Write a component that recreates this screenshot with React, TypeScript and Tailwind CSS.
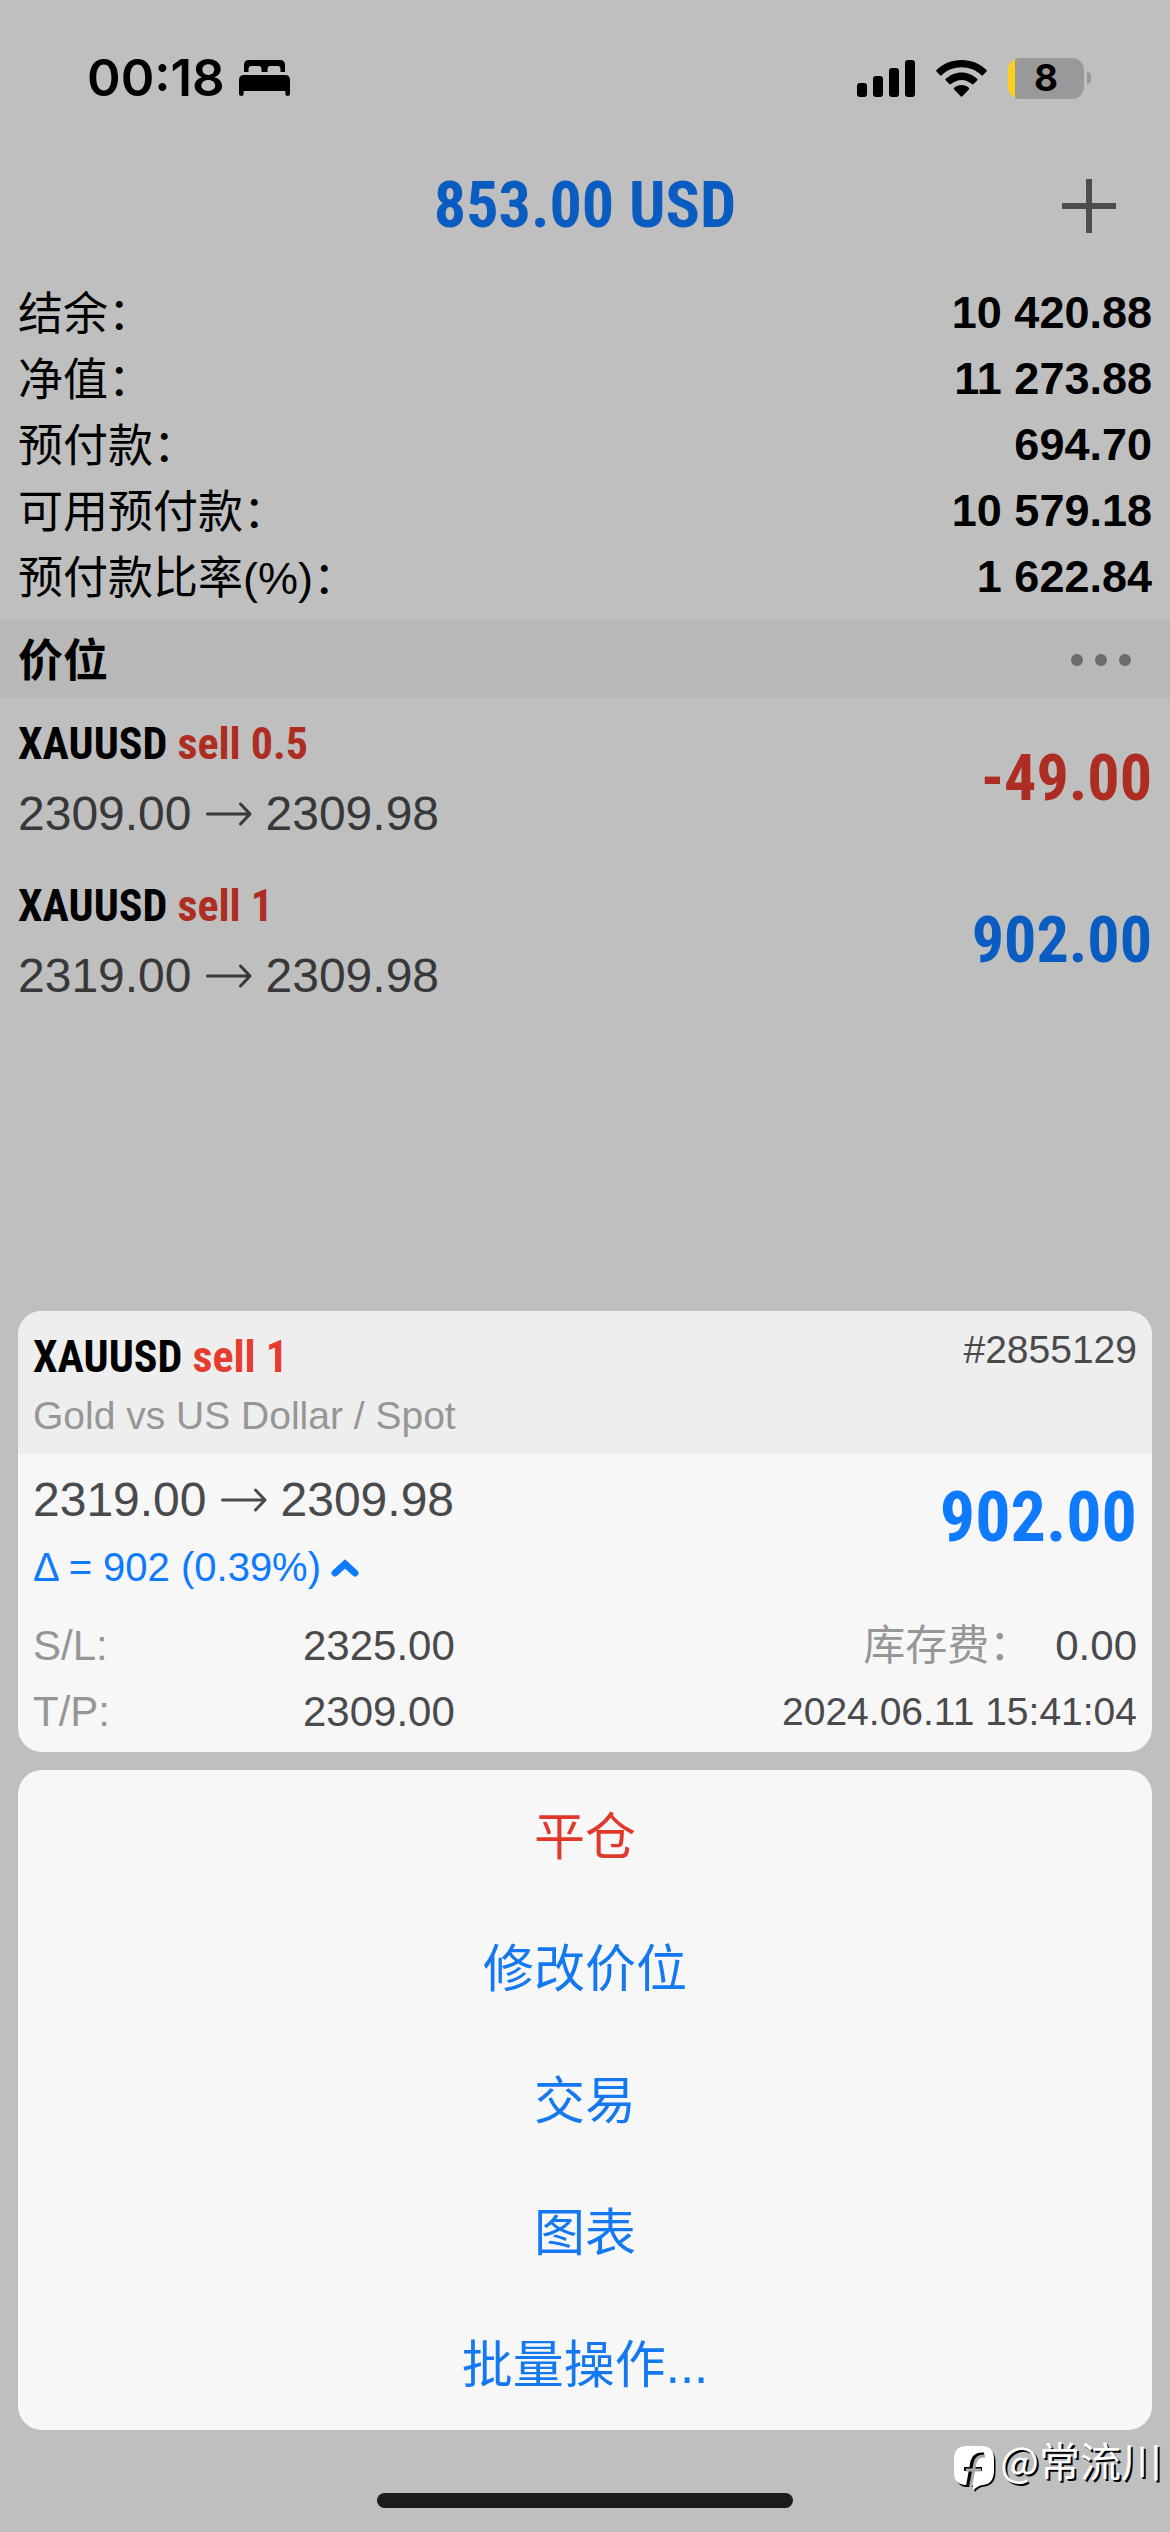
import React from "react";
import clsx from "clsx";

interface Position {
  symbol: string;
  side: string;
  open: string;
  current: string;
  profit: string;
}

interface Action {
  label: string;
  danger?: boolean;
}

const SUMMARY = [
  { label: "结余：", value: "10 420.88" },
  { label: "净值：", value: "11 273.88" },
  { label: "预付款：", value: "694.70" },
  { label: "可用预付款：", value: "10 579.18" },
  { label: "预付款比率(%)：", value: "1 622.84" },
];

const POSITIONS: Position[] = [
  { symbol: "XAUUSD", side: "sell 0.5", open: "2309.00", current: "2309.98", profit: "-49.00" },
  { symbol: "XAUUSD", side: "sell 1", open: "2319.00", current: "2309.98", profit: "902.00" },
];

const ACTIONS: Action[] = [
  { label: "平仓", danger: true },
  { label: "修改价位" },
  { label: "交易" },
  { label: "图表" },
  { label: "批量操作..." },
];

const BedIcon = () => (
  <svg width="51" height="36" viewBox="0 0 51 36" aria-hidden="true">
    <path d="M5 12V5q0-5 5-5h31q5 0 5 5v7h-4.500V9q0-3-3-3h-7q-3 0-3 3v3h-6V9q0-3-3-3h-7q-3 0-3 3v3z" />
    <path d="M0 20q0-5 5-5h41q5 0 5 5v14q0 2-2.300 2t-2.300-2v-3H4.600v3q0 2-2.300 2T0 34z" />
  </svg>
);

const SignalIcon = () => (
  <svg width="58" height="37" viewBox="0 0 58 37" aria-hidden="true">
    <rect x="0" y="23" width="10" height="14" rx="3" />
    <rect x="16" y="16" width="10" height="21" rx="3" />
    <rect x="32" y="8" width="10" height="29" rx="3" />
    <rect x="48" y="0" width="10" height="37" rx="3" />
  </svg>
);

const WifiIcon = () => (
  <svg width="51" height="37" viewBox="0 0 51 37" aria-hidden="true">
    <path d="M25.500 0C35 0 44 3.600 50.500 10q.8.8 0 1.600l-3.600 3.600q-.8.8-1.600 0C40 10 33 7.300 25.500 7.300S11 10 5.700 15.200q-.8.8-1.600 0L.5 11.600q-.8-.8 0-1.600C7 3.600 16 0 25.500 0z" />
    <path d="M25.500 12.500c6 0 11.500 2.300 15.700 6.300q.8.800 0 1.600l-3.700 3.700q-.8.800-1.600 0c-2.800-2.600-6.500-4.200-10.400-4.200s-7.600 1.600-10.400 4.200q-.8.800-1.600 0l-3.700-3.700q-.8-.8 0-1.600c4.200-4 9.700-6.300 15.700-6.300z" />
    <path d="M25.500 25c2.800 0 5.300 1 7.300 2.800q.8.800 0 1.600l-6.400 6.900q-.9.900-1.800 0l-6.400-6.900q-.8-.8 0-1.600c2-1.800 4.500-2.800 7.300-2.800z" />
  </svg>
);

const Battery = () => (
  <div className="flex items-center gap-[3px]">
    <div className="flex h-[41px] w-[76px] items-center justify-center rounded-xl bg-linear-to-r from-[#fccf1c] from-[7px] to-[#999999] to-[7px]">
      <span className="text-[37px] font-bold">8</span>
    </div>
    <div className="h-3 w-1 rounded-r-full bg-[#999999]" />
  </div>
);

const ArrowIcon = () => (
  <svg
    width="46"
    height="24"
    viewBox="0 0 46 24"
    fill="none"
    stroke="currentColor"
    strokeWidth="3"
    strokeLinecap="round"
    strokeLinejoin="round"
    aria-hidden="true"
  >
    <path d="M1.500 12H44M34.500 2l9.500 10-9.500 10" />
  </svg>
);

const WatermarkLogo = () => (
  <svg width="42" height="46" viewBox="0 0 42 46" aria-hidden="true">
    <path
      d="M14 2h14q13 0 13.500 13v11q0 13-11 14.500-6 .5-9.500 5.500l-2-5h-6Q2 41 2 27V15Q2 2 14 2z"
      fill="#000"
    />
    <path
      d="M13 0h14q13 0 13 13v11q0 14-11 15-6 .5-9.500 5.500L18.500 39H13Q0 39 0 26V13Q0 0 13 0z"
      fill="#fff"
    />
    <path d="M30 8.500q-9.500-1-11.500 7L14 40M10 23h18" fill="none" stroke="#000" strokeWidth="4" />
    <path d="M31 10q-8.500-.5-10 7l-4.500 24M12 24h15" fill="none" stroke="#a8a8a8" strokeWidth="3" />
  </svg>
);

const PositionName = ({ symbol, side, sideColor }: { symbol: string; side: string; sideColor: string }) => (
  <p className="font-['Roboto_Condensed','Roboto',sans-serif] text-[44px] font-bold">
    {symbol} <span className={sideColor}>{side}</span>
  </p>
);

const PriceMove = ({ open, current }: { open: string; current: string }) => (
  <p className="flex items-center gap-[14px] text-[48px]">
    {open}
    <ArrowIcon />
    {current}
  </p>
);

const StatusBar = () => (
  <div className="flex h-[156px] items-center justify-between pr-[79px] pl-[87px] font-['Inter',sans-serif]">
    <div className="flex items-center gap-[14px]">
      <span className="text-[51px] font-semibold">00:18</span>
      <BedIcon />
    </div>
    <div className="flex items-center gap-[21px]">
      <SignalIcon />
      <WifiIcon />
      <Battery />
    </div>
  </div>
);

const PositionCard = () => (
  <section className="overflow-hidden rounded-3xl bg-[#f7f7f7] text-[#4a4a4c]">
    <div className="flex h-[143px] items-start justify-between bg-[#eeeeee] px-[15px] pt-4">
      <div>
        <div className="leading-[60px] text-black">
          <PositionName symbol="XAUUSD" side="sell 1" sideColor="text-[#e63c2e]" />
        </div>
        <p className="text-[39px] leading-[58px] text-[#969696]">Gold vs US Dollar / Spot</p>
      </div>
      <p className="text-[39px] leading-[46px]">#2855129</p>
    </div>

    <div className="px-[15px] pt-3 pb-[7px]">
      <div className="flex items-start justify-between">
        <div>
          <div className="leading-[68px]">
            <PriceMove open="2319.00" current="2309.98" />
          </div>
          <p className="flex items-center gap-[10px] text-[40px] leading-[66px] text-[#0d7aff]">
            Δ = 902 (0.39%)
            <svg width="28" height="20" viewBox="0 0 28 20" fill="none" aria-hidden="true">
              <path
                d="M4 16L14 7l10 9"
                stroke="currentColor"
                strokeWidth="7"
                strokeLinecap="round"
              />
            </svg>
          </p>
        </div>
        <p className="font-['Roboto_Condensed','Roboto',sans-serif] text-[70px] leading-[102px] font-bold text-[#0d7aff]">
          902.00
        </p>
      </div>

      <div className="mt-[13px] flex justify-between text-[42px] leading-[66px]">
        <dl className="grid grid-cols-[270px_auto]">
          <dt className="text-[#969696]">S/L:</dt>
          <dd>2325.00</dd>
          <dt className="text-[#969696]">T/P:</dt>
          <dd>2309.00</dd>
        </dl>
        <div className="text-right">
          <dl className="flex justify-end gap-6">
            <dt className="text-[#969696]">库存费：</dt>
            <dd>0.00</dd>
          </dl>
          <p className="text-[39px]">2024.06.11 15:41:04</p>
        </div>
      </div>
    </div>
  </section>
);

const App = () => {
  return (
    <div className="relative flex min-h-screen flex-col bg-[#bfbfbf] font-['Liberation_Sans','Noto_Sans_CJK_SC',sans-serif] text-black">
      <StatusBar />

      <header className="grid h-[100px] grid-cols-[1fr_auto_1fr] items-center px-[54px]">
        <h1 className="col-start-2 font-['Roboto_Condensed','Roboto',sans-serif] text-[64px] leading-[100px] font-bold text-[#0b5cc0]">
          853.00 USD
        </h1>
        <button type="button" aria-label="新订单" className="justify-self-end">
          <svg width="54" height="54" viewBox="0 0 54 54" aria-hidden="true">
            <path d="M0 27h54M27 0v54" stroke="#4d4d4d" strokeWidth="6" />
          </svg>
        </button>
      </header>

      <dl className="px-[18px] pt-6 pb-[11px] text-[45px] leading-[66px]">
        {SUMMARY.map(({ label, value }) => (
          <div key={label} className="flex h-[66px] justify-between">
            <dt className="leading-[70px]">{label}</dt>
            <dd className="font-bold">{value}</dd>
          </div>
        ))}
      </dl>

      <div className="flex h-[77px] items-center justify-between bg-[#b8b8b8] pr-[39px] pl-[18px]">
        <h2 className="pt-1 text-[45px] font-bold">价位</h2>
        <button type="button" aria-label="更多" className="flex gap-3">
          <span className="size-3 rounded-full bg-[#6b6b6b]" />
          <span className="size-3 rounded-full bg-[#6b6b6b]" />
          <span className="size-3 rounded-full bg-[#6b6b6b]" />
        </button>
      </div>

      <ul>
        {POSITIONS.map(({ symbol, side, open, current, profit }) => (
          <li key={side} className="flex items-center justify-between px-[18px] py-[11px]">
            <div className="leading-[70px]">
              <PositionName symbol={symbol} side={side} sideColor="text-[#ad2d23]" />
              <div className="text-[#38383a]">
                <PriceMove open={open} current={current} />
              </div>
            </div>
            <span
              className={clsx(
                "font-['Roboto_Condensed','Roboto',sans-serif] text-[64px] font-bold",
                profit.startsWith("-") ? "text-[#ad2d23]" : "text-[#0b5cc0]"
              )}
            >
              {profit}
            </span>
          </li>
        ))}
      </ul>

      <div className="mt-auto flex flex-col gap-[18px] px-[18px]">
        <PositionCard />
        <div className="flex flex-col rounded-3xl bg-[#f7f7f7]">
          {ACTIONS.map(({ label, danger }) => (
            <button
              key={label}
              type="button"
              className={clsx(
                "h-[132px] pt-1 text-[51px]",
                danger ? "text-[#e0392b]" : "text-[#1478f0]"
              )}
            >
              {label}
            </button>
          ))}
        </div>
      </div>

      <footer className="flex h-[102px] items-end justify-center pb-6">
        <div className="h-[15px] w-[416px] rounded-full bg-[#1c1c1c]" />
      </footer>

      <div className="absolute right-2 bottom-[40px] flex items-end gap-1">
        <WatermarkLogo />
        <span className="font-['Noto_Sans_CJK_SC',sans-serif] text-[41px] leading-[66px] text-white [text-shadow:2px_2px_0_#000]">
          @常流川
        </span>
      </div>
    </div>
  );
};

export default App;
